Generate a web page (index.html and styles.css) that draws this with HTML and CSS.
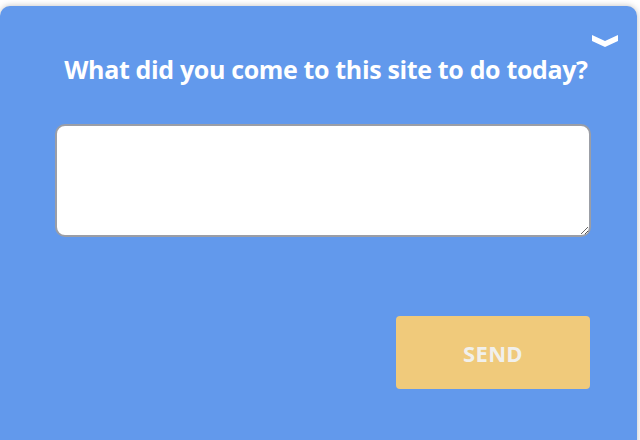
FILE: index.html
```html
<!DOCTYPE html>
<html lang="en">
<head>
    <meta charset="UTF-8">
    <meta name="viewport" content="width=device-width, initial-scale=1.0">
    <title>Feedback</title>
    <link rel="stylesheet" href="styles.css">
</head>
<body>
    <div class="panel">
        <div class="panel-top">
            <button class="collapse-btn" aria-label="Collapse">
                <svg width="26" height="14" viewBox="0 0 26 14">
                    <polygon points="0,2 13,8 26,2 26,8 13,14 0,8" fill="#fff"/>
                </svg>
            </button>
        </div>
        <h2 class="question">What did you come to this site to do today?</h2>
        <form class="answer-form">
            <textarea class="answer"></textarea>
            <div class="actions">
                <button type="submit" class="send-btn">SEND</button>
            </div>
        </form>
    </div>
</body>
</html>
```
FILE: styles.css
```css
/* page */
body {
    margin: 0;
    background: #fff;
    font-family: "Open Sans", Lato, sans-serif;
    overflow: hidden;
}

.panel {
    margin: 6px 3px 0 0;
    height: 440px;
    background-color: #6299ec;
    border-radius: 10px 10px 0 0;
    box-shadow: 0 0 6px rgba(0, 0, 0, 0.25);
    padding: 0 46px 0 55px;
}

/* header */
.panel-top {
    display: flex;
    justify-content: flex-end;
    padding-top: 27px;
    margin-right: -27px;
    height: 14px;
}

.collapse-btn {
    background: none;
    border: none;
    padding: 0;
    width: 26px;
    height: 14px;
    cursor: pointer;
}

.collapse-btn svg {
    display: block;
}

.question {
    margin: 6px 0 0;
    padding-left: 6px;
    color: #fff;
    font-size: 25px;
    font-weight: 700;
    line-height: 32px;
    text-align: center;
    letter-spacing: -0.35px;
}

/* form */
.answer-form {
    margin-top: 39px;
}

.answer {
    display: block;
    box-sizing: border-box;
    width: 100%;
    height: 113px;
    border: 2px solid #9b9ea6;
    border-radius: 10px;
    background: #fff;
    padding: 8px;
    font-size: 16px;
}

.actions {
    display: flex;
    justify-content: flex-end;
    margin-top: 79px;
}

.send-btn {
    width: 194px;
    height: 73px;
    margin-right: 1px;
    background-color: #f0ca7b;
    color: #f1f0ec;
    border: none;
    border-radius: 4px;
    font-family: "Open Sans", sans-serif;
    font-size: 22px;
    font-weight: 700;
    letter-spacing: 0.3px;
    cursor: pointer;
}
```
